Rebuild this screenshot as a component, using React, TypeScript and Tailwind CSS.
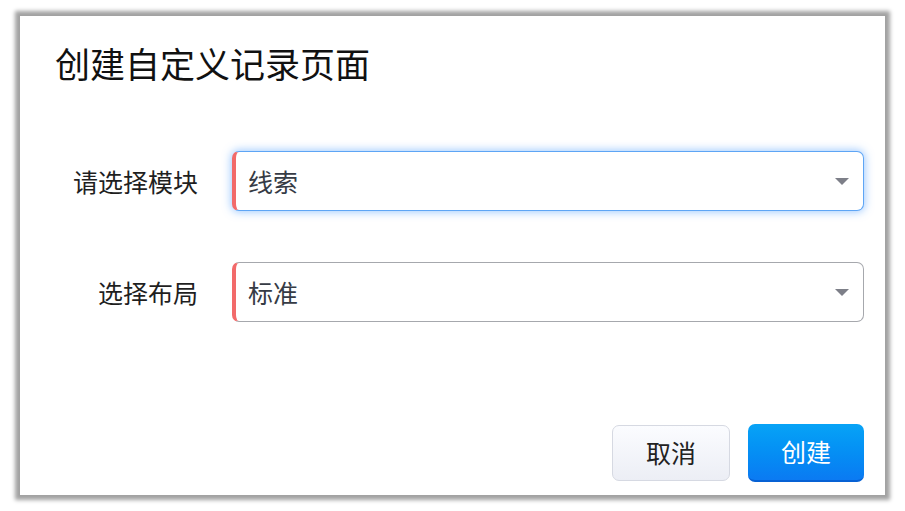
import React from 'react';

const font = { fontFamily: '"Noto Sans CJK SC", "Noto Sans", sans-serif' };

function Caret() {
  return (
    <svg width="14" height="7" viewBox="0 0 14 7" className="shrink-0">
      <path d="M0 0 H14 L7 7 Z" fill="#7d7f88" />
    </svg>
  );
}

function SelectBox({ value, focused }: { value: string; focused?: boolean }) {
  return (
    <div
      className={
        focused
          ? 'flex h-[60px] flex-1 items-center justify-between rounded-[7px] border border-l-4 border-[#5ea5f5] border-l-[#f26a6a] bg-white pr-[14px] pl-[12px] shadow-[0_0_8px_1px_rgba(64,150,255,0.5)]'
          : 'flex h-[60px] flex-1 items-center justify-between rounded-[7px] border border-l-4 border-[#a6a8ad] border-l-[#f26a6a] bg-white pr-[14px] pl-[12px]'
      }
    >
      <span className="text-[25px] leading-none text-[#363b45]">{value}</span>
      <Caret />
    </div>
  );
}

function FormRow({ label, children }: { label: string; children: React.ReactNode }) {
  return (
    <div className="flex items-center gap-[34px]">
      <div className="w-[143px] text-right text-[25px] leading-none text-[#1f1f1f]">
        {label}
      </div>
      {children}
    </div>
  );
}

export default function App() {
  return (
    <div className="h-[511px] w-[905px] overflow-hidden bg-white pt-[16px] pl-[20px]" style={font}>
      <div className="flex h-[479px] w-[865px] flex-col bg-white pt-[27px] pr-[21px] pb-[13px] pl-[35px] shadow-[0_0_4px_5px_#a2a2a2]">
        <h1 className="text-[35px] leading-[40px] font-normal text-[#111]">创建自定义记录页面</h1>

        <div className="mt-[68px] flex flex-col gap-[51px]">
          <FormRow label="请选择模块">
            <SelectBox value="线索" focused />
          </FormRow>
          <FormRow label="选择布局">
            <SelectBox value="标准" />
          </FormRow>
        </div>

        <div className="mt-auto flex items-center justify-end gap-[18px]">
          <button className="h-[56px] w-[118px] rounded-[7px] border border-[#d6d9e2] bg-gradient-to-b from-[#fbfcff] to-[#eceef5] text-[25px] text-[#222]">
            取消
          </button>
          <button className="h-[58px] w-[116px] rounded-[7px] border-b-2 border-[#0661d4] bg-gradient-to-b from-[#08a3f6] to-[#0b7af2] text-[25px] text-white">
            创建
          </button>
        </div>
      </div>
    </div>
  );
}
